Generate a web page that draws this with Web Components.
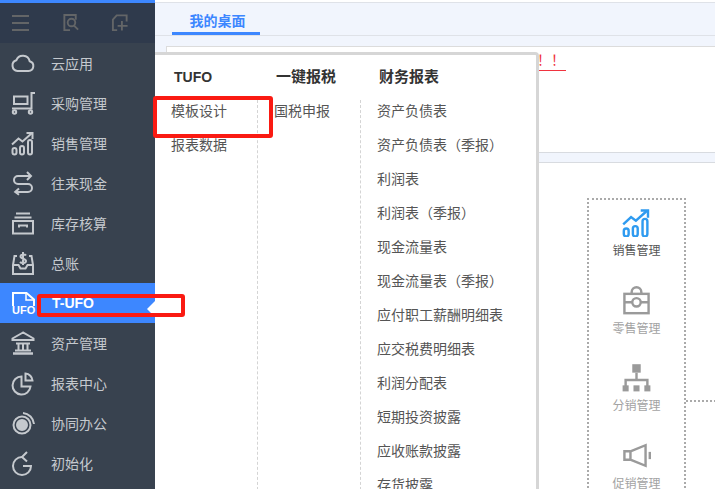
<!DOCTYPE html>
<html>
<head>
<meta charset="utf-8">
<title>T-UFO</title>
<style>
  html, body { margin: 0; height: 100%; overflow: hidden; background: #fff; }
  body { font-family: "Liberation Sans", "Noto Sans CJK SC", sans-serif; font-size: 14px; color: #333; }
</style>
</head>
<body>
<app-shell>
  <side-nav slot="nav"></side-nav>
  <desk-main slot="main"></desk-main>
  <flyout-menu></flyout-menu>
  <red-mark style="left:153px;top:96px;width:120px;height:42px"></red-mark>
  <red-mark style="left:37px;top:294px;width:148px;height:23px"></red-mark>
</app-shell>

<script>
// Icons are drawn on a 24x24 box, stroked with currentColor
const ICONS = {
  cloud: '<path d="M6.500 20h11a5 5 0 0 0 1.200-9.800A7 7 0 0 0 5.300 9.300 5.500 5.500 0 0 0 6.500 20z"/>',
  cart: '<path d="M24 2h-3.500v15.500H1"/><rect x="3" y="5.500" width="13.500" height="7.500"/><circle cx="3.500" cy="21" r="1.700"/><circle cx="19.500" cy="21" r="1.700"/>',
  sales: '<path d="M1 13.500l6.500-6 4 3 9-8"/><path d="M15.500 2h6v6"/><rect x="1.500" y="17" width="4" height="6.500" rx="2"/><rect x="9" y="15" width="4" height="8.500" rx="2"/><rect x="17" y="9" width="4" height="14.500" rx="2"/>',
  flow: '<path d="M16 1l4 4-4 4"/><path d="M20 5H7a4 4 0 0 0 0 8h10a4 4 0 0 1 0 8H4"/><path d="M8 17.500l-3.800 3.500 3.800 2.800"/>',
  stock: '<path d="M5 2.500h14M3.500 6.500h17"/><rect x="2" y="10" width="20" height="12.500"/><path d="M8 16.500v-2h8v2"/>',
  ledger: '<path d="M6 5H3.500L2 14v9h20v-9l-1.500-9H18"/><path d="M2 14h5.500l2 3.500h5l2-3.500H22"/><path d="M15 4.500C14 3 9.500 3 9.500 5.500S15 7.500 15 10s-4.500 2.500-6 1M12 1v13"/>',
  bank: '<path d="M12 1.500L1.500 7.500v1.500h21V7.500z"/><path d="M2 22.500h20" stroke-width="2.500"/><path d="M5 12.500h14M7.500 13v6M12 13v6M16.500 13v6M4 19.500h16"/>',
  pie: '<path d="M10.500 5.500a9 9 0 1 0 9 10h-9z"/><path d="M14.500 2.500a7.500 7.500 0 0 1 7 7h-7z"/>',
  collab: '<circle cx="11" cy="14" r="8.500"/><circle cx="11" cy="14" r="5" fill="currentColor"/><path d="M12 2a12 12 0 0 1 11 11"/>',
  init: '<path d="M11 6A9 9 0 1 0 20 15H12"/><path d="M16 1l-5 5 5 4.500"/>'
};

function icon(name, size) {
  return `<svg width="${size}" height="${size}" viewBox="0 0 24 24" fill="none" stroke="currentColor" stroke-width="2">${ICONS[name]}</svg>`;
}

const shellTpl = document.createElement('template');
shellTpl.innerHTML = `
  <style>
    :host { display: flex; width: 715px; height: 489px; overflow: hidden; position: relative; }
    ::slotted([slot="nav"]) { flex: 0 0 155px; }
    ::slotted([slot="main"]) { flex: 1 1 auto; min-width: 0; }
  </style>
  <slot name="nav"></slot>
  <slot name="main"></slot>
  <slot></slot>
`;
class AppShell extends HTMLElement {
  constructor() {
    super();
    this.attachShadow({ mode: 'open' }).appendChild(shellTpl.content.cloneNode(true));
  }
}
customElements.define('app-shell', AppShell);

const NAV = [
  ['cloud', '云应用'], ['cart', '采购管理'], ['sales', '销售管理'], ['flow', '往来现金'],
  ['stock', '库存核算'], ['ledger', '总账'], ['ufo', 'T-UFO'], ['bank', '资产管理'],
  ['pie', '报表中心'], ['collab', '协同办公'], ['init', '初始化']
];

class SideNav extends HTMLElement {
  constructor() {
    super();
    const rows = NAV.map(([ic, label]) => {
      if (ic === 'ufo') {
        return `<div class="row on">
          <span class="ufo">
            <svg width="23" height="15" viewBox="0 0 23 15" fill="none" stroke="#fff" stroke-width="2"><path d="M1 14V1h13.500l7.500 6.500V14"/><path d="M14 1v7h8" stroke-width="1.500"/></svg>
            <b>UFO</b>
          </span>
          <span class="label">${label}</span>
          <i class="arrow"></i>
        </div>`;
      }
      return `<div class="row"><span class="ic">${icon(ic, 24)}</span><span class="label">${label}</span></div>`;
    }).join('');
    this.attachShadow({ mode: 'open' }).innerHTML = `
      <style>
        :host { display: flex; flex-direction: column; background: #38424f; height: 489px; border-top: 3px solid #3d87ff; box-sizing: border-box; color: #c5c9ce; }
        .tools { height: 40px; flex: none; background: #2f3a4c; display: flex; align-items: center; padding-left: 12px; color: #636567; }
        .tools svg { display: block; }
        .row { height: 40px; flex: none; display: flex; align-items: center; position: relative; font-size: 14px; }
        .ic { width: 24px; height: 24px; margin-left: 11px; margin-right: 16px; }
        .ic svg { display: block; overflow: visible; }
        .row.on { background: #3d87ff; color: #fff; font-weight: bold; }
        .ufo { width: 24px; height: 30px; margin-left: 12px; margin-right: 16px; display: block; position: relative; }
        .ufo svg { display: block; margin-top: 4px; }
        .ufo b { position: absolute; left: 0; top: 17px; font-size: 11px; line-height: 11px; color: #fff; }
        .arrow { position: absolute; right: 0; top: 18px; border: 8px solid transparent; border-right: 8px solid #fff; border-left: 0; }
      </style>
      <div class="tools">
        <svg width="17" height="16" viewBox="0 0 17 16" fill="none" stroke="currentColor" stroke-width="2"><path d="M0 1h17M0 8h17M0 15h17"/></svg>
        <svg width="18" height="18" viewBox="0 0 18 19" fill="none" stroke="currentColor" stroke-width="2" style="margin-left:33px"><path d="M8 17H2V1h12v5"/><circle cx="9.500" cy="9" r="4"/><path d="M12.500 12.500l4 4"/></svg>
        <svg width="18" height="18" viewBox="0 0 18 19" fill="none" stroke="currentColor" stroke-width="2" style="margin-left:31px"><path d="M6 17H1.500V6l4-4.500H16V8"/><path d="M11 7.500v10M6.500 12.500H17"/></svg>
      </div>
      ${rows}
    `;
  }
}
customElements.define('side-nav', SideNav);

const TUFO_MENU = [
  { title: 'TUFO', width: 103, head: 'font-size:14px;margin-left:19px', items: ['模板设计', '报表数据'] },
  { title: '一键报税', width: 103, head: '', items: ['国税申报'] },
  { title: '财务报表', width: 175, head: '', items: ['资产负债表', '资产负债表（季报）', '利润表', '利润表（季报）', '现金流量表', '现金流量表（季报）', '应付职工薪酬明细表', '应交税费明细表', '利润分配表', '短期投资披露', '应收账款披露', '存货披露'] }
];

class FlyoutMenu extends HTMLElement {
  constructor() {
    super();
    const cols = TUFO_MENU.map(c => `
      <section style="width:${c.width}px">
        <h4 style="${c.head}">${c.title}</h4>
        <ul>${c.items.map(t => `<li>${t}</li>`).join('')}</ul>
      </section>`).join('');
    this.attachShadow({ mode: 'open' }).innerHTML = `
      <style>
        :host { position: absolute; left: 155px; top: 52px; width: 384px; height: 437px; box-sizing: border-box; background: #fff; border: solid #d6d6d6; border-width: 3px 3px 0 0; border-top-right-radius: 4px; display: flex; color: #555; overflow: hidden; }
        section { box-sizing: border-box; flex: none; padding-top: 12px; }
        h4 { margin: 0 0 0 18px; font-size: 15px; line-height: 20px; font-weight: bold; color: #333; }
        ul { list-style: none; margin: 13px 0 0; padding: 0 0 0 16px; height: 400px; border-right: 1px dashed #d4d4d4; }
        section:last-child ul { border-right: 0; }
        li { height: 34px; line-height: 22px; font-size: 14px; white-space: nowrap; }
      </style>
      ${cols}
    `;
  }
}
customElements.define('flyout-menu', FlyoutMenu);

const MODULE_ICONS = {
  sales: ICONS.sales,
  retail: '<path d="M8 6.500V5a4 4 0 0 1 8 0v1.500"/><rect x="2" y="6.500" width="20" height="16"/><circle cx="12" cy="13.500" r="3.500"/><path d="M2 13.500h6.500M15.500 13.500H22"/>',
  dist: '<rect x="8.500" y="1" width="7" height="7" fill="currentColor" stroke="none"/><path d="M12 8v6M3 19v-5h18v5"/><rect x="0.500" y="18.500" width="5" height="5" fill="currentColor" stroke="none"/><rect x="9.500" y="18.500" width="5" height="5" fill="currentColor" stroke="none"/><rect x="18.500" y="18.500" width="5" height="5" fill="currentColor" stroke="none"/>',
  promo: '<path d="M7 8.500L19.500 3.500v17L7 15.500z"/><path d="M7 8.500H2v7h5"/><path d="M23 9v6"/>'
};

class ModuleTile extends HTMLElement {
  constructor() {
    super();
    const active = this.hasAttribute('active');
    this.attachShadow({ mode: 'open' }).innerHTML = `
      <style>
        :host { display: flex; flex-direction: column; align-items: center; flex: none; color: ${active ? '#2f9bf0' : '#9a9a9a'}; height: 77.500px; }
        svg { display: block; }
        span { margin-top: 6px; font-size: 12px; line-height: 16px; color: ${active ? '#555' : '#a3a3a3'}; }
      </style>
      <svg width="29" height="29" viewBox="0 0 24 24" fill="none" stroke="currentColor" stroke-width="2">${MODULE_ICONS[this.getAttribute('icon')]}</svg>
      <span><slot></slot></span>
    `;
  }
}
customElements.define('module-tile', ModuleTile);

class DeskMain extends HTMLElement {
  constructor() {
    super();
    this.attachShadow({ mode: 'open' }).innerHTML = `
      <style>
        :host { display: flex; flex-direction: column; height: 489px; background: #fff; padding-top: 2px; box-sizing: border-box; overflow: hidden; }
        .tabs { flex: none; height: 34px; background: #f1f5fd; border: solid #dfe2e8; border-width: 1px 0; box-sizing: border-box; padding-left: 17px; }
        .tab { width: 88px; height: 32px; box-sizing: border-box; border-bottom: 3px solid #3d87ff; padding: 10px 0 0 3px; text-align: center; font-size: 14px; font-weight: bold; line-height: 16px; color: #3d87ff; }
        .gap1 { flex: none; height: 10px; background: #f1f5fd; }
        .notice-wrap { flex: none; height: 106px; background: #f1f5fd; padding-left: 11px; }
        .notice { height: 106px; background: #fff; box-sizing: border-box; border-top: 1px solid #dcdcdc; border-left: 1px solid #dcdcdc; position: relative; }
        .warn { position: absolute; left: 370px; top: 4px; height: 20px; box-sizing: border-box; color: #f0333f; font-size: 14px; line-height: 19px; border-bottom: 1px solid #f0333f; white-space: nowrap; padding-right: 1px; }
        .gap2 { flex: none; height: 11px; background: #f1f5fd; border: solid #d8dbe0; border-width: 1px 0; box-sizing: border-box; }
        .flow { flex: 1; position: relative; }
        .box { position: absolute; left: 432px; top: 35px; width: 99px; height: 330px; box-sizing: border-box; border: 2px dotted #aaa; padding-top: 8px; display: flex; flex-direction: column; }
        .link { position: absolute; left: 531px; top: 237px; width: 30px; border-top: 2px dotted #aaa; }
      </style>
      <div class="tabs"><div class="tab">我的桌面</div></div>
      <div class="gap1"></div>
      <div class="notice-wrap"><div class="notice"><div class="warn">！！</div></div></div>
      <div class="gap2"></div>
      <div class="flow">
        <div class="box">
          <module-tile icon="sales" active>销售管理</module-tile>
          <module-tile icon="retail">零售管理</module-tile>
          <module-tile icon="dist">分销管理</module-tile>
          <module-tile icon="promo">促销管理</module-tile>
        </div>
        <div class="link"></div>
      </div>
    `;
  }
}
customElements.define('desk-main', DeskMain);

class RedMark extends HTMLElement {
  constructor() {
    super();
    this.attachShadow({ mode: 'open' }).innerHTML = `
      <style>
        :host { position: absolute; box-sizing: border-box; border: 4px solid #fa1a12; border-radius: 3px; }
      </style>
    `;
  }
}
customElements.define('red-mark', RedMark);
</script>
</body>
</html>
